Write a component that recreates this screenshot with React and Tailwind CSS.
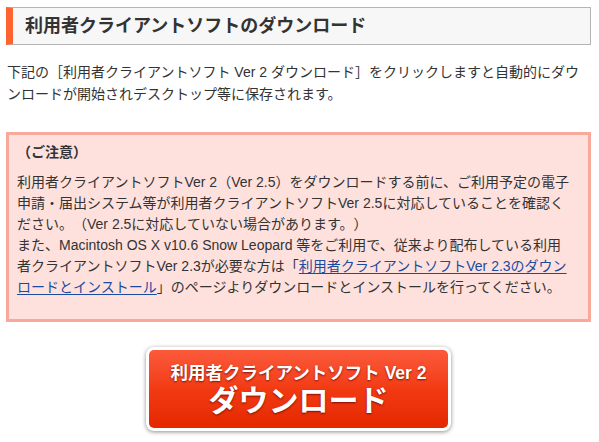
import React from 'react';

const FONT = "font-['Liberation_Sans','Noto_Sans_CJK_JP',sans-serif]";

function Heading({ children }) {
  return (
    <h2 className="flex items-center h-[38px] bg-[#f7f7f7] border border-[#b5b5b5] border-l-[7px] border-l-[#ff6430] pl-[12px] text-[18px] font-bold text-[#333]">
      {children}
    </h2>
  );
}

function Notice() {
  const link = 'text-[#1a4b9f] underline underline-offset-2';
  return (
    <div className="mt-[27px] h-[190px] border-[3px] border-[#f9a99c] bg-[#fee1dd] px-[8px] pt-[7px] text-[14px] leading-[21px] text-[#333] whitespace-nowrap">
      <p className="font-bold mb-[9px]">（ご注意）</p>
      <p>利用者クライアントソフトVer 2（Ver 2.5）をダウンロードする前に、ご利用予定の電子</p>
      <p>申請・届出システム等が利用者クライアントソフトVer 2.5に対応していることを確認く</p>
      <p>ださい。（Ver 2.5に対応していない場合があります。）</p>
      <p>また、Macintosh OS X v10.6 Snow Leopard 等をご利用で、従来より配布している利用</p>
      <p>
        者クライアントソフトVer 2.3が必要な方は「<a href="#" className={link}>利用者クライアントソフトVer 2.3のダウン</a>
      </p>
      <p>
        <a href="#" className={link}>ロードとインストール</a>」のページよりダウンロードとインストールを行ってください。
      </p>
    </div>
  );
}

function DownloadButton() {
  return (
    <button className="mx-auto mt-[25px] block rounded-[8px] bg-white p-[3px] shadow-[0_1px_4px_rgba(0,0,0,0.45)]">
      <div className="flex w-[299px] h-[78px] flex-col items-center rounded-[5px] bg-gradient-to-b from-[#fb5a3a] via-[#f23a12] to-[#e42800] pt-[12px] text-white [text-shadow:0_1px_2px_rgba(100,0,0,0.8)]">
        <span className="text-[17.5px] leading-[22px] font-semibold">利用者クライアントソフト Ver 2</span>
        <span className="text-[30px] leading-[34px] font-bold">ダウンロード</span>
      </div>
    </button>
  );
}

export default function App() {
  return (
    <div className={`w-[599px] h-[442px] overflow-hidden bg-white pl-[6px] pr-[8px] pt-[7px] text-[#333] [text-spacing-trim:space-all] ${FONT}`}>
      <Heading>利用者クライアントソフトのダウンロード</Heading>
      <div className="mt-[16px] pl-px text-[14px] leading-[22px] whitespace-nowrap">
        <p>下記の［利用者クライアントソフト Ver 2 ダウンロード］をクリックしますと自動的にダウ</p>
        <p>ンロードが開始されデスクトップ等に保存されます。</p>
      </div>
      <Notice />
      <DownloadButton />
    </div>
  );
}
